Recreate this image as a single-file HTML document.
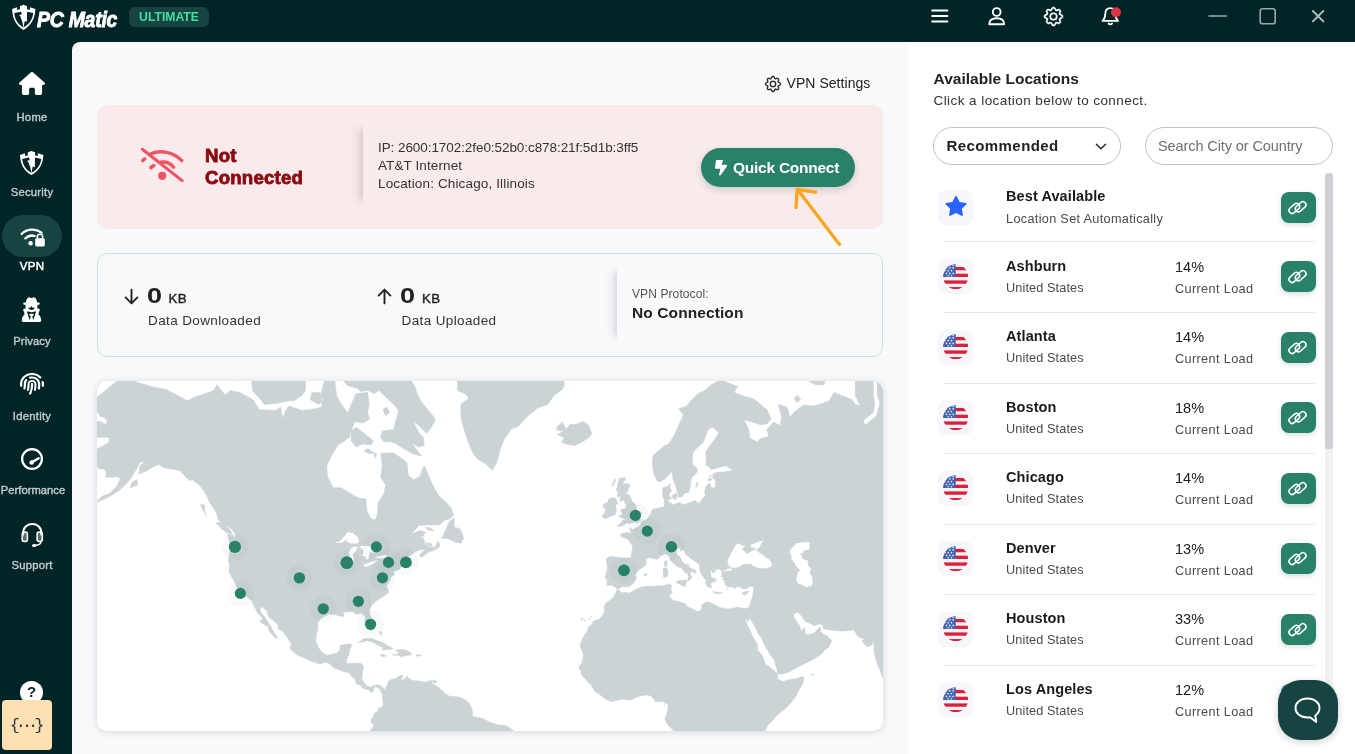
<!DOCTYPE html>
<html lang="en">
<head>
<meta charset="utf-8">
<title>PC Matic - VPN</title>
<style>
*{box-sizing:border-box;margin:0;padding:0}
html,body{width:1355px;height:754px;overflow:hidden}
body{will-change:transform;background:#012426;font-family:"Liberation Sans",Arial,sans-serif;color:#222;position:relative}
.abs{position:absolute}
#topbar{position:absolute;left:0;top:0;width:1355px;height:42px;background:#012426}
#sidebar{position:absolute;left:0;top:42px;width:72px;height:712px;background:#012426}
#main{position:absolute;left:72px;top:42px;width:836px;height:712px;background:#f8f9fb;border-top-left-radius:8px}
#right{position:absolute;left:908px;top:42px;width:447px;height:712px;background:#fff}
.brand{position:absolute;left:36.500px;top:5.200px;font-weight:700;font-style:italic;font-size:22px;line-height:30px;color:#fff;letter-spacing:-0.3px;transform-origin:0 50%;transform:scaleX(.885);white-space:nowrap;-webkit-text-stroke:.9px #fff}
.badge{position:absolute;left:129px;top:7px;width:80px;height:20px;border-radius:6px;background:#174341;color:#3fe0a0;font-weight:700;font-size:12.200px;line-height:20px;text-align:center;letter-spacing:0}
.nav{position:absolute;left:0;width:66px;text-align:center;font-size:11.200px;color:#c3cdcd;line-height:13px;white-space:nowrap;font-weight:400;letter-spacing:.28px;-webkit-text-stroke:.38px #c3cdcd}
.nav.on{color:#fff;-webkit-text-stroke:.45px #fff}
.pill{position:absolute;left:2px;top:215px;width:60px;height:42px;border-radius:21px;background:#174341}
svg{position:absolute;overflow:visible}
.t{position:absolute;white-space:nowrap}
</style>
</head>
<body>
<div id="topbar"></div>
<div id="sidebar"></div>
<div id="main"></div>
<div id="right"></div>

<!-- ===== top bar ===== -->
<svg style="left:8px;top:0px" width="36" height="36" viewBox="0 0 36 36">
  <path d="M4.100 8.900 L9.100 7.200 L9.100 10 L11.900 9.200 L11.900 6.200 L15.500 4.800 L19.100 6.200 L19.100 9.200 L21.900 10 L21.900 7.200 L27.400 8.900 C27.200 17 24 25 15.500 29.900 C7 25 4.300 17 4.100 8.900Z" fill="#fff"/>
  <path d="M6.300 13.100 L12.900 11.700 L19.100 11.700 L25.200 13.100 C24.700 18.500 22 24 15.500 27.500 C9 24 6.800 18.500 6.300 13.100Z" fill="#012426"/>
  <path d="M12.900 9.500 L19.100 9.500 L18.900 21.700 L16.800 21 L15.400 28.200 L14.400 22 L12.300 16.300 L11 15 L13.700 14.400Z" fill="#fff"/>
</svg>
<div class="brand">PC Matic</div>
<div class="badge">ULTIMATE</div>

<!-- hamburger -->
<svg style="left:931px;top:8px" width="18" height="16" viewBox="0 0 18 16" fill="none" stroke="#fff" stroke-width="2" stroke-linecap="round"><path d="M1.2 2.5H16.4M1.2 8H16.4M1.2 13.5H16.4"/></svg>
<!-- user -->
<svg style="left:988px;top:7px" width="18" height="19" viewBox="0 0 18 19" fill="none" stroke="#fff" stroke-width="1.9"><circle cx="8.7" cy="5" r="3.9"/><path d="M1.3 17.3 C1.3 13.6 4.2 11.3 8.7 11.3 C13.2 11.3 16.1 13.6 16.1 17.3 Z" stroke-linejoin="round"/></svg>
<!-- gear -->
<svg style="left:1044px;top:7px" width="19" height="19" viewBox="0 0 16 16" fill="#fff" stroke="#fff" stroke-width=".55"><path d="M8 4.754a3.246 3.246 0 1 0 0 6.492 3.246 3.246 0 0 0 0-6.492M5.754 8a2.246 2.246 0 1 1 4.492 0 2.246 2.246 0 0 1-4.492 0"/><path d="M9.796 1.343c-.527-1.79-3.065-1.79-3.592 0l-.094.319a.873.873 0 0 1-1.255.52l-.292-.16c-1.64-.892-3.433.902-2.54 2.541l.159.292a.873.873 0 0 1-.52 1.255l-.319.094c-1.79.527-1.79 3.065 0 3.592l.319.094a.873.873 0 0 1 .52 1.255l-.16.292c-.892 1.64.901 3.434 2.541 2.54l.292-.159a.873.873 0 0 1 1.255.52l.094.319c.527 1.79 3.065 1.79 3.592 0l.094-.319a.873.873 0 0 1 1.255-.52l.292.16c1.64.893 3.434-.902 2.54-2.541l-.159-.292a.873.873 0 0 1 .52-1.255l.319-.094c1.79-.527 1.79-3.065 0-3.592l-.319-.094a.873.873 0 0 1-.52-1.255l.16-.292c.893-1.64-.902-3.433-2.541-2.54l-.292.159a.873.873 0 0 1-1.255-.52zm-2.633.283c.246-.835 1.428-.835 1.674 0l.094.319a1.873 1.873 0 0 0 2.693 1.115l.291-.16c.764-.415 1.6.42 1.184 1.185l-.159.292a1.873 1.873 0 0 0 1.116 2.692l.318.094c.835.246.835 1.428 0 1.674l-.319.094a1.873 1.873 0 0 0-1.115 2.693l.16.291c.415.764-.42 1.6-1.185 1.184l-.291-.159a1.873 1.873 0 0 0-2.693 1.116l-.094.318c-.246.835-1.428.835-1.674 0l-.094-.319a1.873 1.873 0 0 0-2.692-1.115l-.292.16c-.764.415-1.6-.42-1.184-1.185l.159-.291A1.873 1.873 0 0 0 1.945 8.93l-.319-.094c-.835-.246-.835-1.428 0-1.674l.319-.094A1.873 1.873 0 0 0 3.06 4.377l-.16-.292c-.415-.764.42-1.6 1.185-1.184l.292.159a1.873 1.873 0 0 0 2.692-1.115z"/></svg>
<!-- bell -->
<svg style="left:1101px;top:6px" width="19" height="20" viewBox="0 0 19 20" fill="none" stroke="#fff" stroke-width="1.8" stroke-linejoin="round"><path d="M9.3 2.2 C5.6 2.2 4.3 5.2 4.3 8 C4.3 11.6 3.2 13.3 1.6 14.9 H17 C15.4 13.3 14.3 11.6 14.3 8 C14.3 5.2 13 2.2 9.3 2.2Z"/><path d="M7.6 17.4 C8 18.6 10.6 18.6 11 17.4" stroke-linecap="round"/><circle cx="15" cy="6.2" r="5" fill="#dc3545" stroke="none"/></svg>
<!-- window controls -->
<svg style="left:1200px;top:0" width="140" height="42" viewBox="0 0 140 42" fill="none" stroke="#9aa9a9" stroke-width="1.6" stroke-linecap="round"><path d="M9 16H26.5"/><rect x="60.2" y="8.8" width="15" height="15" rx="2.4"/><path d="M112.900 11 L123.300 21.400 M123.300 11 L112.900 21.400" stroke="#b2bfbf" stroke-width="1.900"/></svg>

<!-- ===== sidebar ===== -->
<div class="pill"></div>
<!-- home -->
<svg style="left:19px;top:72px" width="26" height="23" viewBox="0 0 576 512" fill="#fff"><path d="M575.8 255.5c0 18-15 32.100-32 32.100h-32l.7 160.200c0 2.700-.2 5.400-.5 8.100V472c0 22.100-17.900 40-40 40H456c-1.100 0-2.200 0-3.300-.1c-1.400 .1-2.800 .1-4.200 .1H416 392c-22.100 0-40-17.900-40-40V448 384c0-17.700-14.300-32-32-32H256c-17.700 0-32 14.300-32 32v64 24c0 22.100-17.900 40-40 40H160 128.100c-1.500 0-3-.1-4.500-.2c-1.200 .1-2.400 .2-3.600 .2H104c-22.100 0-40-17.900-40-40V360c0-.9 0-1.900 .1-2.800V287.600H32c-18 0-32-14-32-32.100c0-9 3-17 10-24L266.400 8c7-7 15-8 22-8s15 2 21 7L564.800 231.500c8 7 12 15 11 24z"/></svg>
<div class="nav" style="top:111px;left:-1px">Home</div>
<!-- security shield -->
<svg style="left:20.400px;top:150.500px" width="23.400" height="24" viewBox="4.100 4.800 23.300 25.100" preserveAspectRatio="none">
  <path d="M4.100 8.900 L9.100 7.200 L9.100 10 L11.900 9.200 L11.900 6.200 L15.500 4.800 L19.100 6.200 L19.100 9.200 L21.900 10 L21.900 7.200 L27.400 8.900 C27.200 17 24 25 15.500 29.900 C7 25 4.300 17 4.100 8.900Z" fill="#fff"/>
  <path d="M6.300 13.100 L12.900 11.700 L19.100 11.700 L25.200 13.100 C24.700 18.500 22 24 15.500 27.500 C9 24 6.800 18.500 6.300 13.100Z" fill="#012426"/>
  <path d="M12.900 9.500 L19.100 9.500 L18.900 21.700 L16.800 21 L15.400 28.200 L14.400 22 L12.300 16.300 L11 15 L13.700 14.400Z" fill="#fff"/>
</svg>
<div class="nav" style="top:186px;left:-1px">Security</div>
<!-- vpn -->
<svg style="left:20px;top:226px" width="26" height="21" viewBox="0 0 26 21" fill="none" stroke="#fff" stroke-linecap="round"><path d="M1.600 8 C7 2.600 15.500 2.300 21.600 6.600" stroke-width="2.300"/><path d="M5.400 12.400 C8.300 9.600 12 9.100 14.600 10" stroke-width="2.300"/><circle cx="10.600" cy="17.200" r="2.200" fill="#fff" stroke="none"/><rect x="15.200" y="12.200" width="9.600" height="8.400" rx="1.600" fill="#fff" stroke="none"/><path d="M17.400 12.600 V10.400 C17.400 7.500 22.600 7.500 22.600 10.400 V12.600" stroke-width="1.700"/></svg>
<div class="nav on" style="top:260px;left:-1px;font-size:11.5px">VPN</div>
<!-- privacy -->
<svg style="left:21px;top:298px" width="21" height="24" viewBox="0 0 448 512" fill="#fff"><path d="M171-16c-36.400 0-57.800 58.300-68.300 112H72c-13.300 0-24 10.700-24 24s10.700 24 24 24h24v32c0 17 3.300 33.200 9.300 48H75.500C60.300 224 48 236.300 48 251.500c0 3 .5 5.900 1.400 8.700l28.900 86.600C40.200 379.600 16 428.100 16 482.300c0 16.400 13.300 29.700 29.700 29.700h356.600c16.400 0 29.700-13.300 29.700-29.700 0-54.200-24.200-102.700-62.300-135.400l28.900-86.600c.9-2.800 1.400-5.700 1.400-8.700 0-15.200-12.300-27.500-27.500-27.500h-29.800c6-14.800 9.300-31 9.300-48v-32h24c13.300 0 24-10.700 24-24s-10.700-24-24-24h-30.700c-10.400-53.700-31.900-112-68.300-112-9.600 0-19 3.900-27.500 8.200C241.300-3.600 231.100.1 224 .1s-17.300-3.700-25.500-7.800C190-12.100 180.600-16 171-16m93.700 484.400-24.800-70.900 27.900-32.500c2.700-3.200 4.200-7.200 4.200-11.400 0-9.700-7.800-17.500-17.500-17.500h-61c-9.700 0-17.500 7.800-17.500 17.500 0 4.200 1.500 8.200 4.200 11.400l27.900 32.500-24.800 70.900-57-180.400H162c18.400 10.200 39.500 16 62 16s43.600-5.800 62-16h35.700zM224 256c-34.700 0-64.200-22.100-75.300-53 5.700 3.200 12.300 5 19.300 5h12.400c16.500 0 31.100-10.600 36.300-26.200 2.300-7 12.200-7 14.500 0 5.200 15.600 19.900 26.200 36.300 26.200h12.400c7 0 13.600-1.800 19.300-5-11.100 30.900-40.600 53-75.300 53z"/></svg>
<div class="nav" style="top:335px;left:-1px;letter-spacing:.1px">Privacy</div>
<!-- identity -->
<svg style="left:20px;top:373px" width="24" height="22" viewBox="0 0 512 512" fill="#fff" preserveAspectRatio="none"><path d="M48 256c0-114.900 93.100-208 208-208 63.100 0 119.600 28.100 157.800 72.500 8.600 10.100 23.800 11.200 33.800 2.600s11.200-23.800 2.600-33.800C403.300 34.600 333.700 0 256 0 114.600 0 0 114.600 0 256v40c0 13.300 10.700 24 24 24s24-10.700 24-24zm458.500-52.900c-2.700-13-15.500-21.300-28.400-18.500s-21.300 15.500-18.500 28.400c2.900 13.900 4.500 28.300 4.500 43.100v40c0 13.300 10.700 24 24 24s24-10.700 24-24v-40c0-18.100-1.900-35.800-5.500-52.900zM256 80c-19 0-37.400 3-54.500 8.600-15.200 5-18.700 23.700-8.300 35.900 7.100 8.300 18.800 10.800 29.400 7.900s21.800-4.400 33.400-4.400c70.700 0 128 57.300 128 128v24.900c0 25.200-1.500 50.300-4.400 75.300-1.700 14.600 9.400 27.800 24.200 27.800 11.800 0 21.900-8.600 23.300-20.300 3.300-27.400 5-55 5-82.700v-24.900c0-97.200-78.800-176-176-176zm-105.300 68.700c-9.100-10.600-25.300-11.400-33.900-.4C93.700 178.100 80 215.400 80 256v24.900c0 24.200-2.600 48.400-7.800 71.900-3.400 15.600 7.900 31.100 23.900 31.100 10.500 0 19.900-7 22.200-17.300 6.400-28.100 9.700-56.800 9.700-85.800v-24.900c0-27.200 8.500-52.400 22.900-73.100 7.200-10.400 8-24.600-.2-34.200zM256 160c-53 0-96 43-96 96v24.900c0 35.900-4.600 71.500-13.800 106.100-3.800 14.300 6.700 29 21.500 29 9.500 0 17.900-6.200 20.400-15.400 10.500-39 15.900-79.200 15.900-119.700V256c0-28.700 23.300-52 52-52s52 23.300 52 52v24.900c0 36.300-3.500 72.400-10.400 107.900-2.700 13.900 7.700 27.200 21.800 27.200 10.200 0 19-7 21-17 7.700-38.800 11.600-78.300 11.600-118.100V256c0-53-43-96-96-96m24 96c0-13.300-10.700-24-24-24s-24 10.700-24 24v24.900c0 59.900-11 119.300-32.500 175.200l-5.900 15.300c-4.800 12.400 1.400 26.300 13.800 31s26.300-1.400 31-13.800l5.900-15.300A536.200 536.200 0 0 0 280 280.900z"/></svg>
<div class="nav" style="top:410px;left:-1px">Identity</div>
<!-- performance -->
<svg style="left:19.500px;top:447.200px" width="24" height="24" viewBox="0 0 24 24" fill="none" stroke="#fff"><circle cx="12" cy="12" r="9.900" stroke-width="2.300"/><path d="M11.800 15.400 L18.600 11.300" stroke-width="2.500" stroke-linecap="round"/><circle cx="11.700" cy="15.500" r="2.300" fill="#fff" stroke="none"/></svg>
<div class="nav" style="top:484px;left:0px;letter-spacing:.02px">Performance</div>
<!-- support -->
<svg style="left:20px;top:522px" width="25" height="26" viewBox="0 0 25 26" fill="none" stroke="#fff" stroke-linecap="round"><path d="M3.200 12.500 V11 C3.200 4.800 7.700 2 12.250 2 C16.800 2 21.300 4.800 21.300 11 V12.500" stroke-width="2.100"/><rect x="2.200" y="10" width="5.200" height="9.400" rx="2" stroke-width="1.500" fill="#fff" fill-opacity=".35"/><rect x="17.100" y="10" width="5.200" height="9.400" rx="2" stroke-width="1.500" fill="#fff" fill-opacity=".35"/><path d="M21 19.600 C21 22.300 18.600 23.100 16 23.300" stroke-width="1.500"/><ellipse cx="14.200" cy="23.500" rx="2.300" ry="1.500" fill="#fff" stroke="none"/></svg>
<div class="nav" style="top:559px;left:-1px">Support</div>
<!-- help -->
<div class="abs" style="left:20px;top:680.500px;width:23px;height:23px;border-radius:11.500px;background:#fff;color:#012426;font-weight:700;font-size:15px;line-height:22px;text-align:center">?</div>
<div class="abs" style="left:2px;top:700px;width:50px;height:50px;border-radius:4px;background:#ffe0b2;color:#2b3a3c;font-family:'Liberation Mono','DejaVu Sans Mono',monospace;font-size:17px;line-height:52px;text-align:center;letter-spacing:-4.100px;padding-right:4px">{···}</div>


<style>
.pink{position:absolute;left:97px;top:105px;width:786px;height:124px;border-radius:10px;background:#f9eaec}
.nc{position:absolute;left:205px;top:145px;font-weight:700;font-size:17.500px;line-height:22px;color:#8b0a10;letter-spacing:.2px;-webkit-text-stroke:.8px #8b0a10;transform:scaleX(1.065);transform-origin:0 0}
.ip{position:absolute;left:378px;top:138.700px;font-size:13.500px;line-height:18.100px;color:#333;white-space:nowrap;letter-spacing:-.03px}
.vdiv{position:absolute;width:12px;-webkit-mask-image:linear-gradient(to bottom,transparent 0%,#000 14%,#000 86%,transparent 100%);mask-image:linear-gradient(to bottom,transparent 0%,#000 14%,#000 86%,transparent 100%);background:linear-gradient(to right,rgba(120,90,100,0) 0%,rgba(120,90,100,.07) 55%,rgba(120,90,100,.22) 100%)}
.qc{position:absolute;left:701px;top:148px;width:154px;height:39px;border-radius:20px;background:#2a8169;box-shadow:0 3px 7px rgba(30,80,65,.2)}
.qc span{position:absolute;left:32px;top:9.800px;color:#fff;font-weight:700;font-size:15.500px;line-height:20px;white-space:nowrap;letter-spacing:-.25px}
.stats{position:absolute;left:97px;top:253px;width:786px;height:104px;border-radius:10px;border:1px solid #d6dfdf;background:#f8f9fb}
.big{position:absolute;font-weight:700;font-size:21.500px;line-height:24px;color:#222;transform:scaleX(1.26);transform-origin:0 0}
.kb{position:absolute;font-size:13.300px;line-height:16px;color:#222;font-weight:400;letter-spacing:.3px;-webkit-text-stroke:.4px #222}
.lbl{position:absolute;font-size:13.500px;line-height:16px;color:#333;white-space:nowrap;letter-spacing:.38px}
.mapcard{position:absolute;left:97px;top:381px;width:786px;height:350px;border-radius:10px;background:#fff;overflow:hidden;box-shadow:0 1px 7px rgba(45,50,55,.17)}
</style>

<!-- VPN settings link -->
<svg style="left:764.500px;top:75.500px" width="16" height="16" viewBox="0 0 16 16" fill="#222" stroke="#222" stroke-width=".35"><path d="M8 4.754a3.246 3.246 0 1 0 0 6.492 3.246 3.246 0 0 0 0-6.492M5.754 8a2.246 2.246 0 1 1 4.492 0 2.246 2.246 0 0 1-4.492 0"/><path d="M9.796 1.343c-.527-1.790-3.065-1.790-3.592 0l-.094.319a.873.873 0 0 1-1.255.520l-.292-.160c-1.640-.892-3.433.902-2.540 2.541l.159.292a.873.873 0 0 1-.520 1.255l-.319.094c-1.790.527-1.790 3.065 0 3.592l.319.094a.873.873 0 0 1 .520 1.255l-.160.292c-.892 1.640.901 3.434 2.541 2.540l.292-.159a.873.873 0 0 1 1.255.520l.094.319c.527 1.790 3.065 1.790 3.592 0l.094-.319a.873.873 0 0 1 1.255-.520l.292.160c1.640.893 3.434-.902 2.540-2.541l-.159-.292a.873.873 0 0 1 .520-1.255l.319-.094c1.790-.527 1.790-3.065 0-3.592l-.319-.094a.873.873 0 0 1-.520-1.255l.160-.292c.893-1.640-.902-3.433-2.541-2.540l-.292.159a.873.873 0 0 1-1.255-.520zm-2.633.283c.246-.835 1.428-.835 1.674 0l.094.319a1.873 1.873 0 0 0 2.693 1.115l.291-.160c.764-.415 1.600.420 1.184 1.185l-.159.292a1.873 1.873 0 0 0 1.116 2.692l.318.094c.835.246.835 1.428 0 1.674l-.319.094a1.873 1.873 0 0 0-1.115 2.693l.160.291c.415.764-.420 1.600-1.185 1.184l-.291-.159a1.873 1.873 0 0 0-2.693 1.116l-.094.318c-.246.835-1.428.835-1.674 0l-.094-.319a1.873 1.873 0 0 0-2.692-1.115l-.292.160c-.764.415-1.600-.420-1.184-1.185l.159-.291A1.873 1.873 0 0 0 1.945 8.930l-.319-.094c-.835-.246-.835-1.428 0-1.674l.319-.094A1.873 1.873 0 0 0 3.060 4.377l-.160-.292c-.415-.764.420-1.600 1.185-1.184l.292.159a1.873 1.873 0 0 0 2.692-1.115z"/></svg>
<div class="t" style="left:786.500px;top:75px;font-size:14px;line-height:17px;color:#222;letter-spacing:.05px">VPN Settings</div>

<!-- status card -->
<div class="pink"></div>
<svg style="left:140px;top:147px" width="44" height="36" viewBox="0 0 44 36" fill="none" stroke="#ef5466" stroke-linecap="round">
  <path d="M10.500 7 C20 2.800 33 4.600 41.800 13.600" stroke-width="3.500"/>
  <path d="M2.800 13.600 C3.400 13 4 12.400 4.700 11.900" stroke-width="3.500"/>
  <path d="M20.500 15.200 C25.500 14.200 30.500 16.200 33.600 20.200" stroke-width="3.500"/>
  <path d="M10.800 20.700 C11.700 19.900 12.700 19.200 13.800 18.600" stroke-width="3.500"/>
  <circle cx="22.200" cy="28.800" r="4.100" fill="#ef5466" stroke="none"/>
  <path d="M2.300 2.300 L42.100 33.600" stroke-width="3.100"/>
</svg>
<div class="nc">Not<br>Connected</div>
<div class="vdiv" style="left:351px;top:124px;height:82px"></div>
<div class="ip"><span style="letter-spacing:-.07px">IP: 2600:1702:2fe0:52b0:c878:21f:5d1b:3ff5</span><br><span style="letter-spacing:.1px">AT&amp;T Internet</span><br><span style="letter-spacing:.14px">Location: Chicago, Illinois</span></div>
<div class="qc">
  <svg style="left:14px;top:12px" width="12" height="15.500" viewBox="0 0 384 512" fill="#fff" preserveAspectRatio="none"><path d="M0 256 28.500 28c2-16 15.600-28 31.800-28h168.600c15 0 27.100 12.100 27.100 27.100 0 3.200-.6 6.500-1.700 9.500L208 160h139.300c20.200 0 36.700 16.400 36.700 36.700 0 7.400-2.200 14.600-6.400 20.700l-192.200 281c-5.900 8.600-15.600 13.700-25.900 13.700h-2.900c-15.700 0-28.500-12.800-28.500-28.500q0-3.450.9-6.900L176 288H32c-17.700 0-32-14.300-32-32"/></svg>
  <span>Quick Connect</span>
</div>
<!-- annotation arrow -->
<svg style="left:780px;top:180px" width="80" height="80" viewBox="0 0 80 80" fill="none" stroke="#f9a61c" stroke-width="3.300" stroke-linecap="round" stroke-linejoin="round"><path d="M59.500 64.500 L17.500 9.500"/><path d="M16 27.500 L17.200 9.300 L35.500 12.200"/></svg>

<!-- stats card -->
<div class="stats"></div>
<svg style="left:124px;top:288px" width="16" height="17" viewBox="0 0 16 17" fill="none" stroke="#222" stroke-width="1.900" stroke-linecap="round" stroke-linejoin="round"><path d="M7.500 1.600 V15.200 M1.600 9.400 L7.500 15.400 L13.400 9.400"/></svg>
<div class="big" style="left:147.300px;top:284.200px">0</div>
<div class="kb" style="left:168.500px;top:290.500px">KB</div>
<div class="lbl" style="left:148px;top:313.300px">Data Downloaded</div>
<svg style="left:377px;top:288px" width="16" height="17" viewBox="0 0 16 17" fill="none" stroke="#222" stroke-width="1.900" stroke-linecap="round" stroke-linejoin="round"><path d="M7.500 15.400 V1.800 M1.600 7.600 L7.500 1.600 L13.400 7.600"/></svg>
<div class="big" style="left:400.300px;top:284.200px">0</div>
<div class="kb" style="left:422px;top:290.500px">KB</div>
<div class="lbl" style="left:401.500px;top:313.300px">Data Uploaded</div>
<div class="vdiv" style="left:605px;top:266px;height:76px;background:linear-gradient(to right,rgba(90,100,110,0) 0%,rgba(90,100,110,.05) 55%,rgba(90,100,110,.2) 100%)"></div>
<div class="lbl" style="left:632px;top:287px;font-size:12px;color:#555;line-height:14px;letter-spacing:.1px">VPN Protocol:</div>
<div class="t" style="left:632px;top:304px;font-size:15.500px;line-height:18px;font-weight:700;color:#222;letter-spacing:.1px">No Connection</div>

<!-- map -->
<div class="mapcard">
<svg style="left:0;top:0" width="786" height="350" viewBox="0 0 786 350"><path d="M286.0 28.7L289.6 26.0L292.5 31.2L288.6 34.7ZM-11.0 47.7L-4.4 42.9L2.1 40.1L9.3 43.7L10.3 39.7L7.0 36.3L3.1 35.5L0.5 30.4L-7.0 24.7L-5.1 19.8L5.4 11.9L15.2 3.7L26.7 -4.4L41.4 1.7L54.5 5.6L69.2 8.5L77.4 12.8L90.5 19.8L97.1 16.1L103.6 14.2L116.7 9.5L120.0 3.7L128.2 14.2L133.1 9.5L142.9 11.4L156.0 18.8L162.5 28.7L178.9 29.5L183.8 26.0L185.5 38.0L188.7 29.5L192.0 25.1L205.1 29.5L218.2 27.8L224.7 26.0L224.7 9.5L229.6 -8.5L237.8 -0.3L239.5 14.2L244.4 23.4L250.9 32.1L254.2 23.4L259.1 12.4L270.6 11.4L272.2 23.4L270.6 32.1L272.9 38.0L265.7 42.1L257.5 40.5L254.2 50.1L252.6 56.3L247.6 60.0L241.1 63.8L234.6 74.5L229.6 84.7L230.6 95.7L236.2 106.8L244.4 106.8L250.9 111.0L260.7 116.8L268.9 117.9L269.9 129.6L273.8 137.7L278.7 138.7L280.4 132.4L281.4 121.3L286.9 112.7L288.6 103.8L283.7 96.3L285.3 84.7L283.7 72.4L296.8 71.7L303.3 76.6L309.8 81.3L311.5 94.4L316.4 98.8L322.9 95.7L326.2 86.0L327.9 85.4L332.8 97.6L337.7 108.0L342.6 115.6L349.1 121.3L354.0 126.9L356.7 134.0L353.1 137.7L347.5 139.2L342.6 143.9L329.5 143.9L321.3 144.4L318.0 149.0L311.5 155.4L306.6 160.7L314.8 153.0L322.9 149.5L328.5 151.0L326.2 155.4L321.3 155.4L326.9 157.8L327.9 163.6L331.1 165.5L337.7 166.4L341.3 160.3L343.2 165.0L339.3 168.3L331.1 171.5L324.6 176.5L322.3 174.3L327.9 168.3L322.9 168.8L319.7 170.1L313.1 174.3L308.2 177.4L307.2 181.0L309.8 184.1L306.6 185.4L300.0 187.2L303.3 187.6L296.8 189.3L296.8 194.0L293.5 196.6L292.8 199.1L290.5 203.6L289.2 204.9L290.9 208.5L291.8 211.8L288.2 214.1L284.0 216.9L279.7 219.7L274.5 223.9L272.5 229.3L272.9 233.9L275.5 238.0L277.1 243.9L276.5 247.9L274.2 249.9L271.2 246.8L267.9 240.2L268.3 235.7L264.7 232.0L259.8 233.1L255.8 230.5L250.9 230.8L246.0 231.2L247.0 235.4L242.7 235.0L237.8 233.5L231.9 233.1L228.7 234.6L223.1 238.3L220.5 242.0L220.8 247.2L219.2 254.0L218.8 260.1L220.8 265.4L224.4 270.9L228.0 273.0L230.3 274.4L236.2 273.0L240.1 272.0L242.7 268.9L243.1 264.7L249.3 262.9L254.2 262.9L254.9 264.3L252.6 268.9L251.9 274.0L250.3 276.8L249.0 282.3L252.6 282.6L257.5 282.3L264.0 282.6L266.6 285.3L265.7 290.4L265.0 295.4L265.0 298.8L267.3 302.1L270.6 305.4L273.8 306.1L277.4 304.4L280.4 303.8L283.7 304.8L286.0 306.7L287.6 308.7L289.6 305.4L291.8 300.1L294.1 298.4L298.4 297.8L302.6 294.8L305.6 294.1L305.6 296.8L303.6 298.1L304.6 299.4L309.2 297.1L309.8 294.8L311.5 297.1L315.4 299.4L322.9 300.1L327.9 301.4L332.8 299.8L336.4 299.8L334.4 302.1L340.0 305.4L342.6 307.4L347.5 312.0L352.4 315.3L359.0 315.7L362.9 316.3L368.8 319.3L372.0 321.9L375.3 329.1L375.3 335.0L380.2 336.6L385.1 337.3L393.3 341.5L401.5 344.2L408.1 344.5L413.0 347.1L417.9 350.7L423.4 352.0L424.4 364.6L280.4 364.6L278.7 361.3L273.8 354.7L272.9 350.4L276.1 346.1L277.1 343.2L274.2 342.2L274.2 338.3L276.8 335.0L277.1 332.4L281.0 330.1L282.0 326.8L285.3 326.5L286.3 322.6L285.3 317.0L285.6 313.0L284.0 311.4L283.0 308.1L278.7 305.6L276.5 307.7L276.1 310.7L273.8 311.4L271.5 308.7L267.6 308.1L265.3 307.1L265.0 305.1L261.7 303.4L260.4 303.4L258.1 301.1L258.5 298.4L255.8 296.4L252.6 292.7L251.6 291.4L246.7 290.7L242.7 289.0L237.2 287.0L231.9 282.3L228.0 281.2L223.1 282.9L216.6 280.9L212.0 279.2L206.7 276.8L200.2 274.0L195.3 270.2L193.0 266.8L194.3 262.9L190.7 256.9L185.5 250.4L180.9 247.5L181.2 244.2L177.3 240.2L171.7 235.7L169.1 228.9L164.2 225.5L163.2 228.2L164.2 232.0L167.4 235.7L169.7 239.5L172.4 243.1L174.6 246.8L176.6 251.2L178.2 253.3L180.5 256.2L179.2 258.0L177.9 256.2L174.0 252.6L171.7 248.6L171.7 246.1L168.1 243.9L165.2 242.4L162.5 240.2L165.2 238.7L164.8 235.7L160.9 232.7L159.3 228.9L157.0 225.1L155.7 222.4L155.0 219.7L151.4 217.3L151.1 216.5L147.8 214.9L144.5 214.5L143.5 211.4L139.9 206.5L138.0 201.6L136.3 199.1L133.7 194.0L131.8 190.2L132.7 184.1L131.4 179.7L132.7 172.0L133.1 164.1L130.8 153.4L136.3 154.4L138.0 158.8L138.3 153.0L136.3 150.5L135.7 149.0L131.4 145.4L124.9 141.8L121.6 139.2L120.0 133.4L116.7 126.9L112.4 121.3L110.2 115.6L106.9 109.8L102.0 103.8L95.4 98.8L92.2 99.5L88.9 96.3L82.3 89.3L74.1 88.0L67.6 86.7L61.1 83.4L54.5 86.7L49.6 89.9L42.1 93.2L43.0 84.7L48.0 80.0L43.0 81.3L39.8 88.0L36.5 92.5L33.9 97.6L28.3 103.8L21.8 109.8L15.2 113.9L8.7 117.4L3.8 119.6L-1.1 121.3L5.4 115.1L12.0 112.7L15.2 109.8L20.1 105.0L23.4 97.6L20.1 95.7L15.2 96.3L8.7 96.3L9.3 91.2L7.0 88.0L2.1 88.0L-1.1 83.4L-4.4 76.6L-1.1 68.8L3.8 65.9L12.0 61.5L12.0 56.3L5.4 56.3L-2.8 56.3ZM135.4 153.4L129.1 151.5L124.9 148.0L119.0 141.8L123.3 141.3L128.8 144.4L133.1 149.0ZM109.5 134.5L105.2 128.0L103.6 123.6L107.9 124.1L107.5 129.6ZM33.2 106.8L40.8 103.8L39.8 98.8L34.9 101.3ZM156.0 10.5L162.5 17.0L167.4 23.4L178.9 22.5L192.0 19.8L196.9 19.8L205.1 14.2L208.4 9.5L208.4 -33.0L152.7 -33.0L154.4 -0.3ZM128.2 -3.3L136.3 -0.3L142.9 -5.4L146.2 -33.0L129.8 -33.0ZM213.3 18.8L221.5 23.4L226.4 18.8L223.1 11.4L214.9 11.4ZM338.3 39.7L332.8 48.5L329.5 52.4L322.9 45.4L316.4 40.5L321.3 50.9L326.2 56.3L327.2 64.5L321.3 65.9L314.8 62.3L319.7 68.8L324.6 75.2L316.4 73.1L311.5 70.3L304.9 66.7L300.0 63.0L293.5 60.8L286.9 60.8L283.7 57.0L285.3 50.1L296.8 48.5L298.4 40.5L300.0 36.3L301.7 29.5L296.8 23.4L288.6 16.1L282.0 9.5L277.1 12.4L270.6 9.5L264.0 10.5L260.7 7.6L250.9 4.7L246.0 -0.3L244.4 -33.0L313.1 -33.0L311.5 -3.3L317.7 4.7L320.3 13.3L325.6 22.5L331.5 29.5L336.0 34.7ZM254.2 60.0L259.1 65.9L265.7 63.0L273.8 63.8L276.5 60.0L272.2 56.3L264.0 50.1L259.1 46.2L254.2 50.1ZM267.3 70.3L272.2 72.4L277.1 71.7L270.6 67.4ZM276.5 72.4L278.7 77.2L279.4 72.4ZM344.9 157.4L350.8 157.4L357.3 160.7L363.9 162.2L366.5 157.8L365.5 153.0L362.9 148.0L357.3 145.9L357.3 137.1L352.4 140.3L349.8 146.4L347.5 151.5ZM327.9 145.9L334.4 147.5L337.0 150.0L331.1 149.0ZM328.5 161.7L334.4 162.6L335.4 165.0L330.1 164.1ZM296.8 189.3L303.3 187.2L301.7 188.5L297.4 189.8ZM261.1 261.5L267.3 257.6L273.8 257.2L280.4 259.7L286.9 262.2L291.8 265.7L296.4 267.5L293.5 268.5L284.6 268.7L286.3 266.4L282.0 264.7L275.5 261.1L270.6 259.7L265.7 260.8ZM295.4 273.7L300.7 273.4L301.7 271.6L298.7 268.9L304.3 268.5L309.8 269.2L315.1 273.0L313.1 274.0L308.2 274.4L304.9 276.1L301.7 274.4ZM282.7 274.0L286.9 273.4L289.2 275.1L285.3 275.8ZM319.0 273.7L324.3 274.0L322.9 275.1L319.0 275.1ZM282.7 250.1L284.3 250.8L285.0 254.0L283.0 253.0ZM336.4 299.8L339.3 299.4L339.3 301.8L336.4 301.8ZM395.3 89.3L388.4 82.7L380.2 77.9L375.3 71.0L370.4 58.6L367.1 48.5L363.9 36.3L363.9 23.4L372.0 17.0L368.8 13.3L360.6 9.5L360.6 1.7L359.0 -33.0L467.0 -33.0L467.0 4.7L465.3 8.5L457.2 14.2L450.6 23.4L440.8 26.9L431.0 34.7L421.2 45.4L414.6 47.7L407.4 57.8L403.1 68.8L399.9 81.3ZM464.7 61.5L472.5 63.8L477.8 64.5L486.6 60.0L491.5 57.0L494.8 52.4L491.5 44.5L486.6 40.5L480.1 42.9L472.5 43.7L469.3 48.5L465.3 41.3L459.8 46.2L460.4 49.3L467.0 50.1L460.4 53.2L467.0 57.0ZM623.5 -1.3L614.3 3.7L607.7 9.5L601.2 12.4L594.7 18.8L589.7 25.1L581.6 27.8L586.5 33.8L581.6 44.5L578.3 52.4L575.0 57.8L571.7 63.0L566.8 65.2L561.9 69.5L556.0 74.5L555.4 81.3L555.7 86.7L557.0 93.2L560.3 100.1L562.2 100.7L566.8 98.8L573.4 92.5L574.0 88.6L575.7 94.4L576.0 98.8L578.3 103.8L580.6 111.6L581.6 116.2L585.8 115.6L586.5 112.7L591.4 111.6L593.0 106.8L593.7 101.3L594.7 96.3L599.6 91.9L600.5 88.0L595.6 83.4L595.3 76.6L596.3 71.0L599.6 67.4L606.1 61.5L608.7 54.8L611.0 48.5L615.9 46.2L621.8 51.7L619.2 56.3L612.7 65.2L608.7 71.0L609.4 77.9L608.7 84.0L611.7 85.4L614.3 88.6L620.8 86.7L629.0 84.7L633.9 88.0L637.9 88.6L630.7 90.6L624.1 91.2L620.2 91.2L615.9 93.2L615.9 97.6L618.5 98.8L618.5 105.0L617.6 106.8L614.3 106.8L613.0 102.5L609.4 104.4L607.7 109.8L608.1 114.5L604.5 119.1L602.8 121.9L599.9 121.9L598.9 119.6L593.0 121.3L585.8 124.1L583.2 121.3L578.3 123.0L575.0 124.1L574.4 121.9L571.7 121.3L571.4 118.5L571.7 115.6L572.7 111.6L574.7 109.8L572.7 106.8L573.7 102.5L570.1 105.6L565.8 106.8L565.5 112.7L565.8 115.6L567.2 118.5L567.2 122.5L567.8 124.7L565.2 126.4L561.9 126.4L561.6 127.5L557.0 127.5L554.7 129.6L553.7 133.4L552.1 135.0L550.5 137.7L549.5 138.7L547.2 139.8L544.2 140.8L543.9 144.4L539.7 147.0L535.1 148.5L534.1 147.0L532.8 147.0L533.8 152.0L529.2 151.5L523.6 153.0L524.6 155.9L529.2 157.4L531.8 159.3L535.1 164.1L535.4 167.4L534.7 172.0L533.8 177.0L529.2 177.0L524.3 177.0L519.4 176.1L512.8 175.6L508.9 178.3L510.2 183.2L510.5 187.6L509.5 191.9L507.9 197.0L510.2 198.7L509.9 204.5L514.4 204.0L518.0 205.7L520.7 208.5L524.6 205.7L531.8 205.7L536.7 202.0L539.7 197.0L538.0 194.0L541.6 188.9L546.2 185.9L549.5 183.2L549.1 181.0L548.8 178.3L552.1 176.5L556.4 177.4L560.3 178.3L563.6 175.2L568.1 172.4L572.4 174.7L573.4 179.2L577.6 183.2L579.9 185.4L584.2 186.7L585.8 188.5L588.1 191.9L590.4 191.9L591.4 196.1L590.4 200.3L593.0 199.1L595.0 196.1L593.0 193.2L594.7 189.8L597.9 192.3L599.6 191.5L597.9 188.9L591.4 185.9L592.0 183.7L588.1 183.2L584.8 180.1L583.2 176.1L579.6 173.4L579.3 168.8L579.6 167.8L583.8 166.4L583.5 170.1L586.5 168.3L588.8 173.4L592.7 176.5L596.3 179.2L599.6 181.5L602.5 183.7L602.8 189.8L604.5 193.2L606.8 196.6L608.7 199.1L610.0 199.5L608.4 201.6L610.0 205.3L612.3 206.5L614.6 206.5L613.6 202.4L615.9 200.7L617.6 201.6L617.6 199.5L614.3 196.6L614.0 194.9L613.3 190.6L614.0 189.3L615.9 191.9L618.5 191.1L617.6 188.9L620.8 188.0L624.1 188.9L624.8 191.5L627.4 189.3L630.7 187.6L633.9 187.2L630.7 183.7L630.3 181.0L630.7 177.9L632.6 175.2L633.0 173.4L635.9 168.8L637.9 165.0L639.8 162.6L642.1 162.2L645.4 164.5L649.0 164.5L645.4 167.8L648.7 171.5L650.3 172.4L654.9 169.7L658.8 167.8L653.6 166.4L653.6 163.6L658.5 161.7L663.4 159.8L667.7 159.3L665.0 161.7L663.4 165.0L661.8 167.8L659.5 168.8L661.8 171.1L666.7 174.3L669.0 176.5L673.2 178.8L675.2 183.2L674.9 185.4L669.9 187.6L663.4 187.6L658.5 186.3L653.6 183.2L647.0 183.2L642.1 186.3L637.2 187.2L634.3 186.7L635.6 188.9L632.3 190.2L627.4 190.2L625.4 191.5L624.4 194.0L626.7 197.0L625.1 199.1L627.4 198.7L628.0 202.4L628.7 204.5L631.3 205.7L634.3 206.1L638.8 207.3L639.2 205.3L643.8 206.5L647.0 208.1L650.3 207.3L652.6 205.3L655.5 206.1L657.5 205.7L656.5 208.5L656.2 212.6L655.2 216.9L653.6 221.2L651.9 226.3L651.0 227.0L647.0 227.8L644.7 227.0L640.5 226.3L637.2 227.0L630.7 228.2L621.5 225.9L614.3 222.0L609.4 220.8L604.8 223.9L604.5 228.2L601.2 230.8L596.3 228.6L589.7 225.1L588.8 222.8L582.2 220.8L576.6 219.7L574.4 217.7L572.1 215.3L575.0 211.8L573.7 206.9L575.0 204.5L572.4 203.6L571.1 203.2L565.2 204.9L558.6 204.9L555.4 205.3L548.8 205.3L542.3 206.9L537.0 209.3L532.5 212.2L529.2 211.4L524.3 211.8L521.6 208.9L519.7 209.3L516.7 216.5L514.1 218.1L508.9 222.4L506.9 226.3L507.6 230.5L505.6 234.6L501.4 238.7L496.8 239.8L494.8 243.1L491.5 246.1L489.9 251.2L486.6 255.1L483.3 263.3L483.2 265.4L485.6 269.9L486.6 274.7L485.0 281.9L481.7 286.3L484.0 290.4L484.3 294.1L488.3 297.8L490.6 300.4L494.2 303.8L495.8 307.1L498.1 310.7L501.7 312.7L503.6 314.3L509.5 318.6L514.1 320.6L519.4 319.3L525.9 318.0L532.5 319.3L537.4 317.3L542.9 315.0L547.2 314.3L550.1 314.0L553.7 314.7L556.4 317.6L558.6 320.9L561.9 320.6L566.2 320.3L568.1 321.9L570.8 322.6L571.1 327.5L570.1 331.7L569.4 333.7L567.8 337.3L569.4 341.5L571.7 344.8L575.0 348.1L578.3 351.4L579.3 354.7L578.3 367.9L669.9 367.9L667.7 357.3L666.7 351.4L669.0 348.1L670.6 344.2L674.9 340.6L678.1 336.3L683.0 331.7L687.3 328.5L694.5 321.2L699.4 314.3L702.0 308.7L705.3 303.8L706.3 300.8L706.9 296.1L704.3 295.8L699.4 297.8L692.9 298.4L686.3 300.4L681.4 298.8L680.4 296.8L680.7 293.1L678.1 290.4L673.2 286.3L668.3 283.3L665.7 275.1L660.8 269.5L660.1 262.9L655.9 255.8L653.6 250.4L650.3 244.2L648.7 239.5L645.6 232.2L647.7 236.9L651.0 240.2L652.6 235.7L653.6 233.9L652.9 237.6L654.2 239.5L658.5 246.8L661.1 252.2L665.0 257.6L667.0 262.9L669.9 268.2L673.2 273.4L677.5 279.5L679.1 285.3L680.7 291.1L681.4 293.1L686.3 292.7L692.9 290.4L699.4 287.0L709.2 281.9L715.8 278.5L720.7 275.8L725.6 272.0L728.2 268.2L731.5 266.4L734.8 259.4L730.8 255.5L725.6 253.0L723.6 250.4L723.6 245.7L722.3 246.8L720.0 249.3L717.1 252.2L710.9 253.7L707.9 253.0L707.9 250.4L707.6 246.4L705.3 248.6L705.0 251.2L703.3 247.9L703.0 245.0L700.1 241.3L697.8 237.6L696.1 234.2L697.8 232.0L701.0 231.6L704.3 234.6L705.3 236.1L707.6 239.8L711.2 241.7L717.4 244.6L723.3 242.8L725.6 243.9L726.6 247.9L730.5 248.6L737.4 249.3L742.9 250.1L750.1 249.7L756.7 249.0L758.3 251.2L760.0 254.4L763.2 256.5L768.2 258.0L764.9 260.1L769.8 265.7L774.7 264.3L776.3 260.4L777.0 264.0L777.3 271.6L779.0 278.5L780.6 283.6L782.9 288.7L784.5 293.8L787.8 300.4L792.7 308.4L807.4 308.7L807.4 -33.0L758.3 -33.0L758.3 4.7L758.3 14.2L763.2 25.1L758.3 23.4L755.1 18.8L748.5 16.1L737.1 11.4L732.1 19.8L725.6 22.5L715.8 25.1L706.0 24.3L697.8 30.4L692.9 36.3L691.2 29.5L689.6 26.0L681.4 23.4L684.7 36.3L683.0 44.5L676.5 41.3L669.9 48.5L671.6 55.5L663.4 57.8L660.1 60.8L652.9 57.0L651.9 48.5L647.0 38.8L653.6 40.5L663.4 43.7L669.9 42.9L674.2 38.0L669.9 28.7L656.8 17.9L647.0 15.2L637.2 11.4L640.5 5.6L630.7 1.7ZM520.3 144.9L522.0 145.6L527.5 143.9L529.2 141.8L532.8 142.4L535.7 141.8L540.0 141.6L543.6 139.5L543.6 138.2L541.3 137.7L542.3 136.1L544.6 132.4L543.3 130.2L540.0 130.2L539.3 126.4L538.7 123.6L535.1 120.8L534.1 117.4L532.5 113.9L528.5 112.7L530.2 111.0L532.1 106.2L533.1 103.2L527.5 102.5L525.3 103.8L528.9 97.0L522.6 97.0L521.0 101.9L520.3 106.8L518.7 108.6L521.0 111.6L520.3 116.8L523.0 114.5L523.3 118.5L522.3 120.2L527.5 119.1L527.9 122.5L529.5 123.6L528.9 126.9L528.2 128.0L524.3 128.0L523.9 130.7L525.6 132.4L523.6 134.5L521.6 135.6L524.9 137.1L528.9 138.2L530.2 137.1L528.5 139.2L525.3 139.2L524.3 141.3L522.3 143.4ZM518.0 134.0L519.4 129.6L519.0 127.5L518.7 124.1L521.0 121.9L519.7 120.8L519.0 117.4L515.1 116.8L511.8 117.9L510.8 121.3L506.3 123.0L506.6 126.9L509.5 128.6L507.9 130.7L506.9 133.4L505.0 134.5L505.9 136.6L507.9 137.7L511.8 136.1L516.1 134.5ZM579.6 200.3L582.9 199.5L590.1 199.1L588.4 203.2L588.4 205.7L585.8 204.9L583.2 203.2L579.9 202.0ZM565.8 188.0L569.1 186.7L571.1 189.8L570.4 195.3L568.5 196.1L566.5 196.1L566.5 191.9ZM567.2 183.7L567.2 181.0L569.8 178.8L570.1 183.2L569.1 185.9L567.8 185.4ZM615.9 210.5L619.2 210.9L625.1 211.8L622.5 212.8L617.6 212.2ZM644.7 212.6L647.0 211.1L652.3 209.7L650.0 212.6L647.0 214.1ZM546.9 193.6L549.5 192.3L549.8 194.5L547.8 194.9ZM575.3 114.5L579.3 112.1L580.2 115.1L578.6 118.5L575.7 117.4ZM571.1 116.8L573.4 115.1L574.4 117.4L572.4 118.5ZM598.6 106.8L599.9 101.9L601.2 101.3L600.5 105.0ZM610.7 98.8L612.7 97.0L614.9 97.6L613.0 100.1ZM612.0 95.1L613.6 94.1L614.3 95.7ZM516.1 101.3L518.7 97.6L518.0 100.7L515.1 105.6ZM697.1 17.0L701.0 14.2L703.7 18.8L699.4 21.6ZM707.6 -5.4L712.5 0.7L719.0 3.7L727.2 3.7L728.9 -10.6L722.3 -33.0L709.2 -33.0ZM614.9 196.6L618.2 197.8L619.5 200.3L617.6 199.1ZM630.0 207.3L631.3 206.9L630.7 208.9ZM623.8 195.3L625.8 194.5L625.8 196.1ZM713.8 293.4L717.4 293.4L715.8 294.4ZM566.8 323.2L568.1 322.9L567.5 324.2ZM483.7 238.3L486.0 237.6L485.0 239.5ZM487.3 239.1L488.6 239.1L488.3 240.2ZM492.2 237.6L493.5 236.9L492.5 239.1ZM493.8 235.0L494.8 235.0L494.2 236.1Z" fill="#cbd3d7" stroke="#cbd3d7" stroke-width=".6" stroke-linejoin="round"/><path d="M237.5 161.7L242.7 160.3L247.6 155.4L250.3 151.0L255.8 152.0L260.7 155.9L262.1 160.7L260.7 162.6L254.2 162.6L249.6 160.7L250.9 158.3L244.4 161.7ZM251.6 183.2L252.2 184.5L255.5 184.1L256.8 178.8L255.8 173.4L259.1 169.7L260.7 166.0L257.5 165.5L254.2 166.9L251.6 171.5L252.6 174.3L251.6 178.8ZM261.7 165.5L265.7 165.0L270.6 165.0L273.8 165.5L277.1 169.7L276.8 172.0L272.9 171.1L271.5 177.4L269.3 178.8L268.9 175.2L265.7 175.2L266.3 172.0L266.3 168.8ZM266.0 184.5L268.9 185.9L273.8 184.1L280.4 180.1L280.4 179.2L275.5 180.6L270.6 182.3L267.3 183.2ZM277.8 177.4L280.4 177.4L285.3 177.4L289.6 176.5L289.2 173.8L285.3 174.3L280.4 175.2ZM694.5 167.4L699.4 162.6L706.0 161.2L712.5 161.2L712.5 168.3L706.6 169.7L706.0 172.0L703.3 172.0L706.0 177.9L710.9 179.7L711.5 185.4L714.1 187.6L712.5 191.9L715.1 196.1L715.8 202.4L714.1 204.9L709.2 206.1L704.3 203.6L701.0 202.4L699.1 198.7L700.1 194.9L701.0 190.6L703.7 190.2L699.4 185.4L697.1 181.0L694.5 178.8L694.5 174.3L692.2 171.1ZM776.0 -33.0L779.9 -33.0L779.9 14.2L782.6 21.6L779.3 34.7L768.2 43.7L766.5 39.7L776.7 31.2L778.0 24.3L776.7 14.2Z" fill="#fff"/><circle cx="137.9" cy="165.9" r="13.300" fill="#2a8169" fill-opacity=".04"/><circle cx="143.4" cy="212.4" r="13.300" fill="#2a8169" fill-opacity=".04"/><circle cx="202.4" cy="196.9" r="13.300" fill="#2a8169" fill-opacity=".04"/><circle cx="226.3" cy="227.8" r="13.300" fill="#2a8169" fill-opacity=".04"/><circle cx="261.4" cy="220.3" r="13.300" fill="#2a8169" fill-opacity=".04"/><circle cx="273.6" cy="243.3" r="13.300" fill="#2a8169" fill-opacity=".04"/><circle cx="249.8" cy="181.7" r="13.300" fill="#2a8169" fill-opacity=".04"/><circle cx="279.4" cy="165.9" r="13.300" fill="#2a8169" fill-opacity=".04"/><circle cx="291.5" cy="181.4" r="13.300" fill="#2a8169" fill-opacity=".04"/><circle cx="285.4" cy="196.8" r="13.300" fill="#2a8169" fill-opacity=".04"/><circle cx="308.9" cy="181.4" r="13.300" fill="#2a8169" fill-opacity=".04"/><circle cx="538.4" cy="134.4" r="13.300" fill="#2a8169" fill-opacity=".04"/><circle cx="550.3" cy="150.1" r="13.300" fill="#2a8169" fill-opacity=".04"/><circle cx="574.4" cy="165.8" r="13.300" fill="#2a8169" fill-opacity=".04"/><circle cx="527.0" cy="189.3" r="13.300" fill="#2a8169" fill-opacity=".04"/><circle cx="137.9" cy="165.9" r="6.1" fill="#2a8169"/><circle cx="143.4" cy="212.4" r="5.6" fill="#2a8169"/><circle cx="202.4" cy="196.9" r="5.7" fill="#2a8169"/><circle cx="226.3" cy="227.8" r="5.6" fill="#2a8169"/><circle cx="261.4" cy="220.3" r="5.6" fill="#2a8169"/><circle cx="273.6" cy="243.3" r="5.6" fill="#2a8169"/><circle cx="249.8" cy="181.7" r="6.4" fill="#2a8169"/><circle cx="279.4" cy="165.9" r="5.6" fill="#2a8169"/><circle cx="291.5" cy="181.4" r="5.6" fill="#2a8169"/><circle cx="285.4" cy="196.8" r="5.6" fill="#2a8169"/><circle cx="308.9" cy="181.4" r="5.9" fill="#2a8169"/><circle cx="538.4" cy="134.4" r="5.6" fill="#2a8169"/><circle cx="550.3" cy="150.1" r="5.6" fill="#2a8169"/><circle cx="574.4" cy="165.8" r="5.7" fill="#2a8169"/><circle cx="527.0" cy="189.3" r="5.9" fill="#2a8169"/></svg>
</div>


<style>
.rh{position:absolute;left:933.500px;top:69.500px;font-size:15.500px;line-height:18px;font-weight:700;color:#222;white-space:nowrap;letter-spacing:.02px}
.rs{position:absolute;left:933.500px;top:93.200px;font-size:13.500px;line-height:16px;color:#333;white-space:nowrap;letter-spacing:.43px}
.sel{position:absolute;left:933px;top:127px;width:188px;height:38px;border-radius:19px;border:1px solid #b8c7ca;background:#fff}
.sel span{position:absolute;left:12.500px;top:8px;font-size:15px;line-height:19px;font-weight:700;color:#222;letter-spacing:.42px}
.srch{position:absolute;left:1145px;top:127px;width:188px;height:38px;border-radius:19px;border:1px solid #b8c7ca;background:#fff}
.srch span{position:absolute;left:12px;top:8.500px;font-size:14.500px;line-height:19px;color:#6b6f72;white-space:nowrap;letter-spacing:-.1px}
.ib{position:absolute;left:938px;width:35px;height:35px;border-radius:8px;background:#f6f7fb}
.sep{position:absolute;left:943px;width:372px;height:1px;background:#e1e8ee}
.ct{position:absolute;left:1006px;font-size:14.500px;line-height:18px;font-weight:700;color:#1a1a1a;white-space:nowrap;letter-spacing:.1px}
.cs{position:absolute;left:1006px;font-size:12.700px;line-height:16px;color:#4a4a4a;white-space:nowrap;letter-spacing:.12px}
.pc{position:absolute;left:1175px;font-size:14.500px;line-height:18px;color:#1a1a1a;white-space:nowrap}
.cl{position:absolute;left:1175px;font-size:12.700px;line-height:16px;color:#4a4a4a;white-space:nowrap;letter-spacing:.36px}
.lk{position:absolute;left:1281px;width:35px;height:31px;border-radius:8px;background:#2a8169;box-shadow:0 2px 5px rgba(30,80,65,.18)}
.clip{position:absolute;left:908px;top:42px;width:447px;height:712px;overflow:hidden}
</style>

<div class="clip"><div style="position:absolute;left:-908px;top:-42px;width:1355px;height:754px"><div class="rh">Available Locations</div>
<div class="rs">Click a location below to connect.</div>
<div class="sel"><span>Recommended</span><svg style="left:160.500px;top:15px" width="12" height="7.400" viewBox="0 0 13 8" fill="none" stroke="#222" stroke-width="1.500" stroke-linecap="round" stroke-linejoin="round"><path d="M1.500 1.300 L6.500 6.300 L11.500 1.300"/></svg></div>
<div class="srch"><span>Search City or Country</span></div>
<div class="abs" style="left:1325px;top:173px;width:8px;height:563px;background:#f1f1f2"></div>
<div class="abs" style="left:1325px;top:173px;width:8px;height:275.500px;background:#cfd0d4;border-radius:4px 4px 3px 3px"></div>
<div class="ib" style="top:190px"></div><svg style="left:944.500px;top:196px" width="22" height="20.600" viewBox="0 -32 576 544" fill="#2962ff" preserveAspectRatio="none"><path d="M309.500-18.900c-4.100-8-12.400-13.100-21.400-13.100s-17.300 5.100-21.400 13.100l-73.600 144.200-159.900 25.400c-8.900 1.400-16.300 7.700-19.100 16.300s-.5 18 5.800 24.400l114.400 114.500-25.200 159.900c-1.400 8.900 2.300 17.900 9.600 23.200s16.900 6.100 25 2l144.400-73.400L432.400 491c8 4.100 17.700 3.300 25-2s11-14.200 9.600-23.200l-25.300-159.900 114.400-114.500c6.400-6.400 8.600-15.800 5.800-24.400s-10.100-14.900-19.100-16.300L383 125.300z"/></svg><div class="ct" style="top:186.500px">Best Available</div><div class="cs" style="top:211px;letter-spacing:.32px">Location Set Automatically</div><div class="lk" style="top:192px"><svg style="left:0;top:0" width="35" height="31" viewBox="0 0 35 31" fill="none" stroke="#fff" stroke-width="1.500"><g transform="translate(13.300 16.400) rotate(-41)"><rect x="-6" y="-3.100" width="12" height="6.200" rx="3.100"/></g><g transform="translate(19.700 14.700) rotate(-41)"><rect x="-6" y="-3.100" width="12" height="6.200" rx="3.100"/></g></svg></div><div class="sep" style="top:241px"></div><div class="ib" style="top:259.1px"></div><svg style="left:943px;top:263.6px" width="25.400" height="25.400" viewBox="0 0 26 26"><defs><clipPath id="fc0"><circle cx="13" cy="13" r="12.700"/></clipPath></defs><g clip-path="url(#fc0)"><rect width="26" height="26" fill="#f2f3f6"/><rect y="3" width="26" height="3.400" fill="#d8213b"/><rect y="9.900" width="26" height="3.400" fill="#d8213b"/><rect y="16.800" width="26" height="3.400" fill="#d8213b"/><rect y="23.600" width="26" height="3.400" fill="#d8213b"/><rect x="0" y="0" width="13" height="13.300" fill="#4464b0"/><g fill="#eef1f9"><circle cx="3.600" cy="4" r=".85"/><circle cx="7" cy="4" r=".85"/><circle cx="10.400" cy="4" r=".85"/><circle cx="5.300" cy="6.800" r=".85"/><circle cx="8.700" cy="6.800" r=".85"/><circle cx="2" cy="6.800" r=".85"/><circle cx="3.600" cy="9.600" r=".85"/><circle cx="7" cy="9.600" r=".85"/><circle cx="10.400" cy="9.600" r=".85"/><circle cx="5.300" cy="12" r=".8"/><circle cx="8.700" cy="12" r=".8"/><circle cx="7" cy="1.600" r=".8"/><circle cx="10.400" cy="1.600" r=".8"/></g></g></svg><div class="ct" style="top:256.7px">Ashburn</div><div class="cs" style="top:279.7px">United States</div><div class="pc" style="top:257.7px">14%</div><div class="cl" style="top:280.7px">Current Load</div><div class="lk" style="top:261.0px"><svg style="left:0;top:0" width="35" height="31" viewBox="0 0 35 31" fill="none" stroke="#fff" stroke-width="1.500"><g transform="translate(13.300 16.400) rotate(-41)"><rect x="-6" y="-3.100" width="12" height="6.200" rx="3.100"/></g><g transform="translate(19.700 14.700) rotate(-41)"><rect x="-6" y="-3.100" width="12" height="6.200" rx="3.100"/></g></svg></div><div class="sep" style="top:311.9px"></div><div class="ib" style="top:329.6px"></div><svg style="left:943px;top:334.1px" width="25.400" height="25.400" viewBox="0 0 26 26"><defs><clipPath id="fc1"><circle cx="13" cy="13" r="12.700"/></clipPath></defs><g clip-path="url(#fc1)"><rect width="26" height="26" fill="#f2f3f6"/><rect y="3" width="26" height="3.400" fill="#d8213b"/><rect y="9.900" width="26" height="3.400" fill="#d8213b"/><rect y="16.800" width="26" height="3.400" fill="#d8213b"/><rect y="23.600" width="26" height="3.400" fill="#d8213b"/><rect x="0" y="0" width="13" height="13.300" fill="#4464b0"/><g fill="#eef1f9"><circle cx="3.600" cy="4" r=".85"/><circle cx="7" cy="4" r=".85"/><circle cx="10.400" cy="4" r=".85"/><circle cx="5.300" cy="6.800" r=".85"/><circle cx="8.700" cy="6.800" r=".85"/><circle cx="2" cy="6.800" r=".85"/><circle cx="3.600" cy="9.600" r=".85"/><circle cx="7" cy="9.600" r=".85"/><circle cx="10.400" cy="9.600" r=".85"/><circle cx="5.300" cy="12" r=".8"/><circle cx="8.700" cy="12" r=".8"/><circle cx="7" cy="1.600" r=".8"/><circle cx="10.400" cy="1.600" r=".8"/></g></g></svg><div class="ct" style="top:327.2px">Atlanta</div><div class="cs" style="top:350.2px">United States</div><div class="pc" style="top:328.2px">14%</div><div class="cl" style="top:351.2px">Current Load</div><div class="lk" style="top:331.6px"><svg style="left:0;top:0" width="35" height="31" viewBox="0 0 35 31" fill="none" stroke="#fff" stroke-width="1.500"><g transform="translate(13.300 16.400) rotate(-41)"><rect x="-6" y="-3.100" width="12" height="6.200" rx="3.100"/></g><g transform="translate(19.700 14.700) rotate(-41)"><rect x="-6" y="-3.100" width="12" height="6.200" rx="3.100"/></g></svg></div><div class="sep" style="top:382.5px"></div><div class="ib" style="top:400.2px"></div><svg style="left:943px;top:404.7px" width="25.400" height="25.400" viewBox="0 0 26 26"><defs><clipPath id="fc2"><circle cx="13" cy="13" r="12.700"/></clipPath></defs><g clip-path="url(#fc2)"><rect width="26" height="26" fill="#f2f3f6"/><rect y="3" width="26" height="3.400" fill="#d8213b"/><rect y="9.900" width="26" height="3.400" fill="#d8213b"/><rect y="16.800" width="26" height="3.400" fill="#d8213b"/><rect y="23.600" width="26" height="3.400" fill="#d8213b"/><rect x="0" y="0" width="13" height="13.300" fill="#4464b0"/><g fill="#eef1f9"><circle cx="3.600" cy="4" r=".85"/><circle cx="7" cy="4" r=".85"/><circle cx="10.400" cy="4" r=".85"/><circle cx="5.300" cy="6.800" r=".85"/><circle cx="8.700" cy="6.800" r=".85"/><circle cx="2" cy="6.800" r=".85"/><circle cx="3.600" cy="9.600" r=".85"/><circle cx="7" cy="9.600" r=".85"/><circle cx="10.400" cy="9.600" r=".85"/><circle cx="5.300" cy="12" r=".8"/><circle cx="8.700" cy="12" r=".8"/><circle cx="7" cy="1.600" r=".8"/><circle cx="10.400" cy="1.600" r=".8"/></g></g></svg><div class="ct" style="top:397.8px">Boston</div><div class="cs" style="top:420.8px">United States</div><div class="pc" style="top:398.8px">18%</div><div class="cl" style="top:421.8px">Current Load</div><div class="lk" style="top:402.1px"><svg style="left:0;top:0" width="35" height="31" viewBox="0 0 35 31" fill="none" stroke="#fff" stroke-width="1.500"><g transform="translate(13.300 16.400) rotate(-41)"><rect x="-6" y="-3.100" width="12" height="6.200" rx="3.100"/></g><g transform="translate(19.700 14.700) rotate(-41)"><rect x="-6" y="-3.100" width="12" height="6.200" rx="3.100"/></g></svg></div><div class="sep" style="top:453.1px"></div><div class="ib" style="top:470.7px"></div><svg style="left:943px;top:475.2px" width="25.400" height="25.400" viewBox="0 0 26 26"><defs><clipPath id="fc3"><circle cx="13" cy="13" r="12.700"/></clipPath></defs><g clip-path="url(#fc3)"><rect width="26" height="26" fill="#f2f3f6"/><rect y="3" width="26" height="3.400" fill="#d8213b"/><rect y="9.900" width="26" height="3.400" fill="#d8213b"/><rect y="16.800" width="26" height="3.400" fill="#d8213b"/><rect y="23.600" width="26" height="3.400" fill="#d8213b"/><rect x="0" y="0" width="13" height="13.300" fill="#4464b0"/><g fill="#eef1f9"><circle cx="3.600" cy="4" r=".85"/><circle cx="7" cy="4" r=".85"/><circle cx="10.400" cy="4" r=".85"/><circle cx="5.300" cy="6.800" r=".85"/><circle cx="8.700" cy="6.800" r=".85"/><circle cx="2" cy="6.800" r=".85"/><circle cx="3.600" cy="9.600" r=".85"/><circle cx="7" cy="9.600" r=".85"/><circle cx="10.400" cy="9.600" r=".85"/><circle cx="5.300" cy="12" r=".8"/><circle cx="8.700" cy="12" r=".8"/><circle cx="7" cy="1.600" r=".8"/><circle cx="10.400" cy="1.600" r=".8"/></g></g></svg><div class="ct" style="top:468.3px">Chicago</div><div class="cs" style="top:491.3px">United States</div><div class="pc" style="top:469.3px">14%</div><div class="cl" style="top:492.3px">Current Load</div><div class="lk" style="top:472.6px"><svg style="left:0;top:0" width="35" height="31" viewBox="0 0 35 31" fill="none" stroke="#fff" stroke-width="1.500"><g transform="translate(13.300 16.400) rotate(-41)"><rect x="-6" y="-3.100" width="12" height="6.200" rx="3.100"/></g><g transform="translate(19.700 14.700) rotate(-41)"><rect x="-6" y="-3.100" width="12" height="6.200" rx="3.100"/></g></svg></div><div class="sep" style="top:523.6px"></div><div class="ib" style="top:541.3px"></div><svg style="left:943px;top:545.8px" width="25.400" height="25.400" viewBox="0 0 26 26"><defs><clipPath id="fc4"><circle cx="13" cy="13" r="12.700"/></clipPath></defs><g clip-path="url(#fc4)"><rect width="26" height="26" fill="#f2f3f6"/><rect y="3" width="26" height="3.400" fill="#d8213b"/><rect y="9.900" width="26" height="3.400" fill="#d8213b"/><rect y="16.800" width="26" height="3.400" fill="#d8213b"/><rect y="23.600" width="26" height="3.400" fill="#d8213b"/><rect x="0" y="0" width="13" height="13.300" fill="#4464b0"/><g fill="#eef1f9"><circle cx="3.600" cy="4" r=".85"/><circle cx="7" cy="4" r=".85"/><circle cx="10.400" cy="4" r=".85"/><circle cx="5.300" cy="6.800" r=".85"/><circle cx="8.700" cy="6.800" r=".85"/><circle cx="2" cy="6.800" r=".85"/><circle cx="3.600" cy="9.600" r=".85"/><circle cx="7" cy="9.600" r=".85"/><circle cx="10.400" cy="9.600" r=".85"/><circle cx="5.300" cy="12" r=".8"/><circle cx="8.700" cy="12" r=".8"/><circle cx="7" cy="1.600" r=".8"/><circle cx="10.400" cy="1.600" r=".8"/></g></g></svg><div class="ct" style="top:538.9px">Denver</div><div class="cs" style="top:561.9px">United States</div><div class="pc" style="top:539.9px">13%</div><div class="cl" style="top:562.9px">Current Load</div><div class="lk" style="top:543.2px"><svg style="left:0;top:0" width="35" height="31" viewBox="0 0 35 31" fill="none" stroke="#fff" stroke-width="1.500"><g transform="translate(13.300 16.400) rotate(-41)"><rect x="-6" y="-3.100" width="12" height="6.200" rx="3.100"/></g><g transform="translate(19.700 14.700) rotate(-41)"><rect x="-6" y="-3.100" width="12" height="6.200" rx="3.100"/></g></svg></div><div class="sep" style="top:594.1px"></div><div class="ib" style="top:611.9px"></div><svg style="left:943px;top:616.4px" width="25.400" height="25.400" viewBox="0 0 26 26"><defs><clipPath id="fc5"><circle cx="13" cy="13" r="12.700"/></clipPath></defs><g clip-path="url(#fc5)"><rect width="26" height="26" fill="#f2f3f6"/><rect y="3" width="26" height="3.400" fill="#d8213b"/><rect y="9.900" width="26" height="3.400" fill="#d8213b"/><rect y="16.800" width="26" height="3.400" fill="#d8213b"/><rect y="23.600" width="26" height="3.400" fill="#d8213b"/><rect x="0" y="0" width="13" height="13.300" fill="#4464b0"/><g fill="#eef1f9"><circle cx="3.600" cy="4" r=".85"/><circle cx="7" cy="4" r=".85"/><circle cx="10.400" cy="4" r=".85"/><circle cx="5.300" cy="6.800" r=".85"/><circle cx="8.700" cy="6.800" r=".85"/><circle cx="2" cy="6.800" r=".85"/><circle cx="3.600" cy="9.600" r=".85"/><circle cx="7" cy="9.600" r=".85"/><circle cx="10.400" cy="9.600" r=".85"/><circle cx="5.300" cy="12" r=".8"/><circle cx="8.700" cy="12" r=".8"/><circle cx="7" cy="1.600" r=".8"/><circle cx="10.400" cy="1.600" r=".8"/></g></g></svg><div class="ct" style="top:609.4px">Houston</div><div class="cs" style="top:632.4px">United States</div><div class="pc" style="top:610.4px">33%</div><div class="cl" style="top:633.4px">Current Load</div><div class="lk" style="top:613.8px"><svg style="left:0;top:0" width="35" height="31" viewBox="0 0 35 31" fill="none" stroke="#fff" stroke-width="1.500"><g transform="translate(13.300 16.400) rotate(-41)"><rect x="-6" y="-3.100" width="12" height="6.200" rx="3.100"/></g><g transform="translate(19.700 14.700) rotate(-41)"><rect x="-6" y="-3.100" width="12" height="6.200" rx="3.100"/></g></svg></div><div class="sep" style="top:664.7px"></div><div class="ib" style="top:682.4px"></div><svg style="left:943px;top:686.9px" width="25.400" height="25.400" viewBox="0 0 26 26"><defs><clipPath id="fc6"><circle cx="13" cy="13" r="12.700"/></clipPath></defs><g clip-path="url(#fc6)"><rect width="26" height="26" fill="#f2f3f6"/><rect y="3" width="26" height="3.400" fill="#d8213b"/><rect y="9.900" width="26" height="3.400" fill="#d8213b"/><rect y="16.800" width="26" height="3.400" fill="#d8213b"/><rect y="23.600" width="26" height="3.400" fill="#d8213b"/><rect x="0" y="0" width="13" height="13.300" fill="#4464b0"/><g fill="#eef1f9"><circle cx="3.600" cy="4" r=".85"/><circle cx="7" cy="4" r=".85"/><circle cx="10.400" cy="4" r=".85"/><circle cx="5.300" cy="6.800" r=".85"/><circle cx="8.700" cy="6.800" r=".85"/><circle cx="2" cy="6.800" r=".85"/><circle cx="3.600" cy="9.600" r=".85"/><circle cx="7" cy="9.600" r=".85"/><circle cx="10.400" cy="9.600" r=".85"/><circle cx="5.300" cy="12" r=".8"/><circle cx="8.700" cy="12" r=".8"/><circle cx="7" cy="1.600" r=".8"/><circle cx="10.400" cy="1.600" r=".8"/></g></g></svg><div class="ct" style="top:680.0px">Los Angeles</div><div class="cs" style="top:703.0px">United States</div><div class="pc" style="top:681.0px">12%</div><div class="cl" style="top:704.0px">Current Load</div><div class="lk" style="top:684.3px"><svg style="left:0;top:0" width="35" height="31" viewBox="0 0 35 31" fill="none" stroke="#fff" stroke-width="1.500"><g transform="translate(13.300 16.400) rotate(-41)"><rect x="-6" y="-3.100" width="12" height="6.200" rx="3.100"/></g><g transform="translate(19.700 14.700) rotate(-41)"><rect x="-6" y="-3.100" width="12" height="6.200" rx="3.100"/></g></svg></div></div></div><div class="abs" style="left:1278px;top:680px;width:60px;height:60px;border-radius:23px;background:#164442;box-shadow:0 2px 8px rgba(0,0,0,.18)"><svg style="left:16px;top:17px" width="28" height="27" viewBox="0 0 28 27" fill="none" stroke="#fff" stroke-width="1.900" stroke-linejoin="round"><path d="M13.500 1.500 C20.500 1.500 25.500 5.500 25.500 11 C25.500 14.200 23.800 16.800 21.300 18.500 L22.300 25 L16 20.300 C15.200 20.450 14.400 20.500 13.500 20.500 C6.500 20.500 1.500 16.500 1.500 11 C1.500 5.500 6.500 1.500 13.500 1.500Z"/></svg></div>
</body>
</html>
